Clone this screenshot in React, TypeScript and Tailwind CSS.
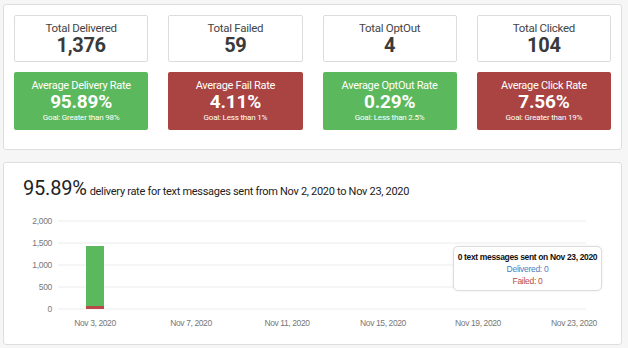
import React from 'react';

const totals = [
  { label: 'Total Delivered', value: '1,376' },
  { label: 'Total Failed', value: '59' },
  { label: 'Total OptOut', value: '4' },
  { label: 'Total Clicked', value: '104' },
];

const rates = [
  { label: 'Average Delivery Rate', value: '95.89%', goal: 'Goal: Greater than 98%', good: true },
  { label: 'Average Fail Rate', value: '4.11%', goal: 'Goal: Less than 1%', good: false },
  { label: 'Average OptOut Rate', value: '0.29%', goal: 'Goal: Less than 2.5%', good: true },
  { label: 'Average Click Rate', value: '7.56%', goal: 'Goal: Greater than 19%', good: false },
];

const yTicks = [
  { label: '2,000', y: 16 },
  { label: '1,500', y: 38 },
  { label: '1,000', y: 60 },
  { label: '500', y: 82 },
  { label: '0', y: 104 },
];

const xTicks = [
  { label: 'Nov 3, 2020', x: 91 },
  { label: 'Nov 7, 2020', x: 187 },
  { label: 'Nov 11, 2020', x: 283 },
  { label: 'Nov 15, 2020', x: 379 },
  { label: 'Nov 19, 2020', x: 474 },
  { label: 'Nov 23, 2020', x: 570 },
];

function DeliveryChart() {
  return (
    <svg width="617" height="130" className="block" style={{ fontFamily: '"Liberation Sans", Arial, sans-serif' }}>
      {yTicks.map((t) => (
        <g key={t.label}>
          <line x1="54" x2="582" y1={t.y} y2={t.y} stroke="#ececec" strokeWidth="1" />
          <text x="48" y={t.y + 3} textAnchor="end" fontSize="8.5" fill="#777" letterSpacing="-0.3">
            {t.label}
          </text>
        </g>
      ))}
      <rect x="82" y="41" width="18" height="60" fill="#5cb85c" />
      <rect x="82" y="101" width="18" height="3" fill="#b94a48" />
      {xTicks.map((t) => (
        <text key={t.label} x={t.x} y="121" textAnchor="middle" fontSize="8.5" fill="#777" letterSpacing="-0.4">
          {t.label}
        </text>
      ))}
    </svg>
  );
}

export default function App() {
  return (
    <div className="min-h-[348px] w-[628px] bg-[#f6f6f6] pl-[3px] pt-[4px] font-['Roboto',sans-serif]">
      <div className="w-[619px] rounded-[3px] border border-[#dedede] bg-white px-[10px] pt-[10px] pb-[19px]">
        <div className="grid grid-cols-4 gap-x-5 gap-y-[10px]">
          {totals.map((t) => (
            <div key={t.label} className="flex h-[47px] flex-col items-center justify-center rounded-[2px] border border-[#dcdcdc] text-[#3a3a3a]">
              <div className="text-[11.5px] leading-[13px] tracking-[-0.3px] text-[#444]">{t.label}</div>
              <div className="text-[20px] leading-[21px] font-bold tracking-[-0.3px]">{t.value}</div>
            </div>
          ))}
          {rates.map((r) => (
            <div
              key={r.label}
              className={`flex h-[58px] flex-col items-center justify-center rounded-[2px] text-white ${r.good ? 'bg-[#5cb85c]' : 'bg-[#a94442]'}`}
            >
              <div className="text-[11px] leading-[13px] tracking-[-0.3px]">{r.label}</div>
              <div className="text-[19px] leading-[20px] font-bold tracking-[-0.2px]">{r.value}</div>
              <div className="text-[8px] leading-[11px] tracking-[-0.2px]">{r.goal}</div>
            </div>
          ))}
        </div>
      </div>

      <div className="relative mt-[12px] h-[183px] w-[619px] rounded-[3px] border border-[#dedede] bg-white">
        <div className="flex items-baseline gap-[3px] pl-[19px] pt-[12px] text-[#222]">
          <span className="text-[20px] leading-[26px] tracking-[-0.2px]">95.89%</span>
          <span className="text-[11px] tracking-[-0.3px]">delivery rate for text messages sent from Nov 2, 2020 to Nov 23, 2020</span>
        </div>
        <div className="mt-[4px]">
          <DeliveryChart />
        </div>
        <div className="absolute left-[449px] top-[83px] flex h-[45px] w-[149px] flex-col items-center justify-center rounded-[5px] border border-[#ddd] bg-white text-[8.5px] leading-[12px] shadow-[0_0_3px_rgba(0,0,0,0.08)] font-['Liberation_Sans',Arial,sans-serif]">
          <div className="font-bold tracking-[-0.35px] text-[#111]">0 text messages sent on Nov 23, 2020</div>
          <div className="tracking-[-0.3px] text-[#4a7fc1]">Delivered: 0</div>
          <div className="tracking-[-0.3px] text-[#b94a48]">Failed: 0</div>
        </div>
      </div>
    </div>
  );
}
